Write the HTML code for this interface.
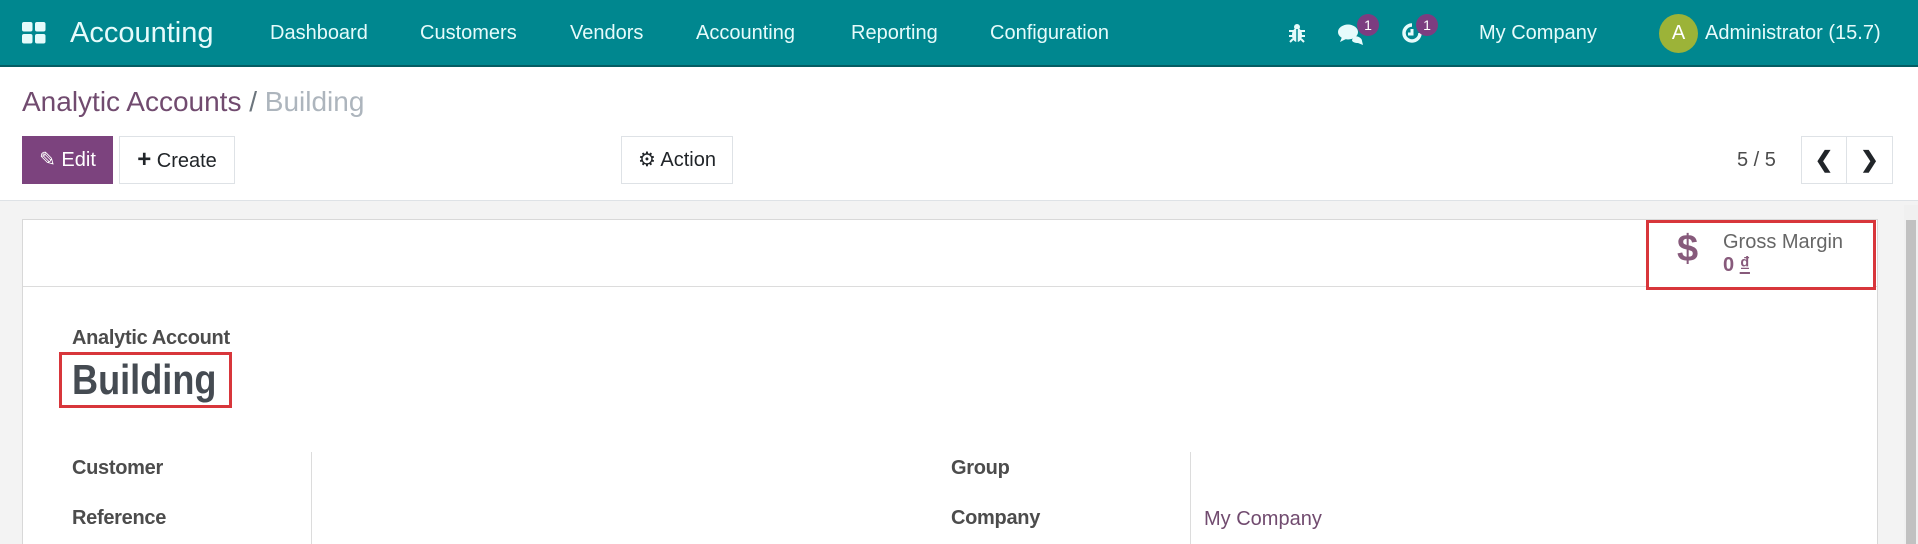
<!DOCTYPE html>
<html style="width:1918px;height:544px;overflow:hidden"><head><meta charset="utf-8"><style>
*{box-sizing:border-box;margin:0;padding:0}
body{width:1918px;height:544px;overflow:hidden;font-family:"Liberation Sans",sans-serif;background:#f3f3f3;position:relative}
.a{position:absolute;white-space:nowrap}
.nav{position:absolute;left:0;top:0;width:1918px;height:67px;background:#00878f;border-bottom:2px solid #045d63;color:#e6fbfb}
.nav .a{top:0;line-height:66px;font-size:20px}
.btn{position:absolute;top:136px;height:48px;border:1px solid #dee2e6;background:#fff;font-size:20px;line-height:46px;color:#212529;text-align:center}
.badge{position:absolute;width:22px;height:22px;border-radius:11px;background:#7c3d80;color:#fff;font-size:14px;line-height:22px;text-align:center}
.lbl{position:absolute;font-size:20px;font-weight:bold;color:#4c4c4c;letter-spacing:-0.3px}
</style></head><body>
<div class="a" style="left:0;top:0;width:1918px;height:200px;background:#fff"></div>
<div class="nav">
  <svg class="a" style="left:22px;top:22px" width="24" height="22" viewBox="0 0 24 22"><rect x="0" y="0" width="10.5" height="9.5" rx="2" fill="#e6fbfb"/><rect x="13" y="0" width="10.5" height="9.5" rx="2" fill="#e6fbfb"/><rect x="0" y="12" width="10.5" height="9.5" rx="2" fill="#e6fbfb"/><rect x="13" y="12" width="10.5" height="9.5" rx="2" fill="#e6fbfb"/></svg>
  <div class="a" style="left:70px;font-size:29px">Accounting</div>
  <div class="a" style="left:270px">Dashboard</div>
  <div class="a" style="left:420px">Customers</div>
  <div class="a" style="left:570px">Vendors</div>
  <div class="a" style="left:696px">Accounting</div>
  <div class="a" style="left:851px">Reporting</div>
  <div class="a" style="left:990px">Configuration</div>
  <svg class="a" style="left:1289px;top:23px" width="16" height="20" viewBox="0 0 16 20"><ellipse cx="8" cy="12" rx="5" ry="7" fill="#e6fbfb"/><circle cx="8" cy="4" r="3" fill="#e6fbfb"/><path d="M0 8h16M0 13h16M1 19l3-3M15 19l-3-3" stroke="#e6fbfb" stroke-width="2"/><path d="M8 6v13" stroke="#00878f" stroke-width="1.5"/></svg>
  <svg class="a" style="left:1338px;top:22px" width="26" height="24" viewBox="0 0 26 24"><ellipse cx="10" cy="10" rx="10" ry="7.5" fill="#e6fbfb"/><path d="M4 15l-2 5 6-3z" fill="#e6fbfb"/><path d="M16 14c4 0 8 2 8 5l1 4-5-2c-3 0-6-1-6-3" fill="#e6fbfb"/></svg>
  <div class="badge" style="left:1357px;top:14px">1</div>
  <svg class="a" style="left:1401px;top:22px" width="22" height="22" viewBox="0 0 22 22"><path d="M11 3a8 8 0 1 0 8 8" fill="none" stroke="#e6fbfb" stroke-width="3.5"/><path d="M11 7v5h-4" fill="none" stroke="#e6fbfb" stroke-width="3"/></svg>
  <div class="badge" style="left:1416px;top:14px">1</div>
  <div class="a" style="left:1479px">My Company</div>
  <div class="a" style="left:1659px;top:14px;width:39px;height:39px;border-radius:20px;background:#9cb338;line-height:39px;text-align:center;font-size:20px;color:#fff">A</div>
  <div class="a" style="left:1705px">Administrator (15.7)</div>
</div>
<div class="a" style="left:22px;top:84px;font-size:28px;line-height:36px;color:#714b6f">Analytic Accounts <span style="color:#6c757d">/</span> <span style="color:#adb5bd">Building</span></div>
<div class="btn" style="left:22px;width:91px;background:#7c437e;border-color:#7c437e;color:#fff">✎ Edit</div>
<div class="btn" style="left:119px;width:116px"><b style="font-size:24px">+</b> Create</div>
<div class="btn" style="left:621px;width:112px">⚙ Action</div>
<div class="a" style="left:1737px;top:136px;line-height:48px;font-size:20px;color:#4c4c4c">5 / 5</div>
<div class="btn" style="left:1801px;width:46px;font-weight:bold;font-size:22px">&#10094;</div>
<div class="btn" style="left:1846px;width:47px;font-weight:bold;font-size:22px">&#10095;</div>
<div class="a" style="left:0;top:200px;width:1918px;height:1px;background:#dee2e6"></div>
<div class="a" style="left:1904px;top:205px;width:14px;height:339px;background:#f0f0f0"></div>
<div class="a" style="left:1906px;top:220px;width:10px;height:324px;background:#c1c1c1"></div>
<div class="a" style="left:22px;top:219px;width:1856px;height:325px;background:#fff;border:1px solid #d8d8d8;border-bottom:none"></div>
<div class="a" style="left:23px;top:286px;width:1854px;height:1px;background:#dcdcdc"></div>
<div class="a" style="left:1646px;top:220px;width:230px;height:70px;border:3px solid #d8363b;background:#fff"></div>
<div class="a" style="left:1677px;top:228px;font-size:38px;font-weight:bold;color:#875a7b">$</div>
<div class="a" style="left:1723px;top:231px;font-size:20px;color:#666">Gross Margin</div>
<div class="a" style="left:1723px;top:254px;font-size:20px;font-weight:bold;color:#875a7b">0 <u>₫</u></div>
<div class="lbl" style="left:72px;top:327px">Analytic Account</div>
<div class="a" style="left:59px;top:352px;width:173px;height:56px;border:3px solid #d8363b"></div>
<div class="a" style="left:72px;top:354px;font-size:42px;font-weight:bold;color:#454b52;line-height:52px;transform:scaleX(0.86);transform-origin:0 0">Building</div>
<div class="lbl" style="left:72px;top:457px">Customer</div>
<div class="lbl" style="left:72px;top:507px">Reference</div>
<div class="lbl" style="left:951px;top:457px">Group</div>
<div class="lbl" style="left:951px;top:507px">Company</div>
<div class="a" style="left:311px;top:452px;width:1px;height:92px;background:#dcdcdc"></div>
<div class="a" style="left:1190px;top:452px;width:1px;height:92px;background:#dcdcdc"></div>
<div class="a" style="left:1204px;top:508px;font-size:20px;color:#714b6f">My Company</div>
</body></html>
